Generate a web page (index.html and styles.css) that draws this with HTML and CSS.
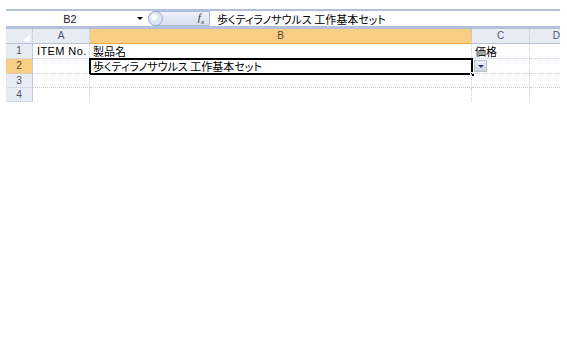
FILE: index.html
```html
<!DOCTYPE html>
<html lang="ja">

<head>
    <meta charset="UTF-8">
    <title>Sheet</title>
    <link rel="stylesheet" href="styles.css">
</head>

<body>
    <div class="app">
        <!-- Formula bar -->
        <div class="formula-bar">
            <div class="name-box">B2</div>
            <div class="name-arrow"></div>
            <div class="fx-pill">
                <span class="fx-circle"></span>
                <span class="fx">f<sub>x</sub></span>
            </div>
            <div class="formula-text">歩くティラノサウルス 工作基本セット</div>
        </div>

        <!-- Sheet grid -->
        <div class="sheet">
            <div class="hdr corner"><span class="corner-tri"></span></div>
            <div class="hdr">A</div>
            <div class="hdr sel">B</div>
            <div class="hdr">C</div>
            <div class="hdr last">D</div>

            <div class="rowhdr">1</div>
            <div class="cell item">ITEM No.</div>
            <div class="cell jp">製品名</div>
            <div class="cell jp">価格</div>
            <div class="cell last"></div>

            <div class="rowhdr sel">2</div>
            <div class="cell"></div>
            <div class="cell jp active">歩くティラノサウルス 工作基本セット<span class="handle"></span></div>
            <div class="cell"><span class="dd-btn"></span></div>
            <div class="cell last"></div>

            <div class="rowhdr">3</div>
            <div class="cell"></div>
            <div class="cell"></div>
            <div class="cell"></div>
            <div class="cell last"></div>

            <div class="rowhdr">4</div>
            <div class="cell nb"></div>
            <div class="cell nb"></div>
            <div class="cell nb"></div>
            <div class="cell nb last"></div>
        </div>
    </div>
</body>

</html>
```

FILE: styles.css
```css
* {
    margin: 0;
    padding: 0;
    box-sizing: border-box;
}

body {
    background: #fff;
    font-family: "Liberation Sans", "Noto Sans CJK JP", sans-serif;
    font-size: 11px;
    color: #000;
}

.app {
    margin: 9px 0 0 6px;
    width: 554px;
}

/* Formula bar */
.formula-bar {
    height: 20px;
    border-top: 2px solid #b3c0dd;
    border-bottom: 3px solid #b3c0dd;
    background: #fff;
    display: flex;
    align-items: center;
}

.name-box {
    width: 128px;
    text-align: center;
    font-size: 11px;
    color: #222;
}

.name-arrow {
    width: 0;
    height: 0;
    border-left: 3px solid transparent;
    border-right: 3px solid transparent;
    border-top: 3px solid #000;
    margin-left: 3px;
}

.fx-pill {
    margin-left: 5px;
    width: 62px;
    height: 15px;
    border: 1px solid #a9b9d6;
    border-left: none;
    border-radius: 8px 0 0 8px;
    background: linear-gradient(#eef2fa, #d7e0f0);
    display: flex;
    align-items: center;
    justify-content: space-between;
    padding-right: 5px;
}

.fx-circle {
    width: 15px;
    height: 15px;
    border-radius: 50%;
    border: 1px solid #9fb0cf;
    background: radial-gradient(circle at 40% 40%, #fff 0, #fff 2px, #dfe6f3 4px);
}

.fx {
    font-family: "Liberation Serif", serif;
    font-style: italic;
    font-size: 11px;
    color: #333;
}

.fx sub {
    font-size: 7px;
}

.formula-text {
    margin-left: 7px;
    font-family: "Noto Sans CJK JP", sans-serif;
    font-feature-settings: "palt";
    font-size: 11px;
    line-height: 14px;
}

/* Sheet grid */
.sheet {
    display: grid;
    grid-template-columns: 27px 57px 382px 58px 30px;
    grid-template-rows: 15px 15px 15px 14px 14px;
}

.hdr {
    background: #e6ebf4;
    border-right: 1px dotted #b6c0da;
    border-bottom: 1px solid #b6c2da;
    text-align: center;
    font-size: 10px;
    line-height: 14px;
    color: #4a5670;
}

.hdr.sel {
    background: #f8cd84;
    border-bottom-color: #f0a94a;
    color: #5a4a30;
}

.hdr.last {
    border-right: none;
    text-align: right;
    overflow: hidden;
}

.corner {
    position: relative;
}

.corner-tri {
    position: absolute;
    right: 2px;
    bottom: 2px;
    width: 0;
    height: 0;
    border-left: 7px solid transparent;
    border-bottom: 7px solid #fff;
}

.rowhdr {
    background: #e6ebf4;
    border-right: 1px solid #c3cde0;
    border-bottom: 1px dotted #c3cbe0;
    text-align: center;
    font-size: 10px;
    line-height: 14px;
    color: #4a5670;
}

.rowhdr.sel {
    background: #f8cd84;
    color: #5a4a30;
}

.cell {
    border-right: 1px dotted #c5cbe3;
    border-bottom: 1px dotted #c5cbe3;
    padding-left: 4px;
    font-size: 11px;
    line-height: 14px;
    white-space: nowrap;
    position: relative;
}

.cell.item {
    letter-spacing: 0.4px;
}

.cell.jp {
    font-family: "Noto Sans CJK JP", sans-serif;
    font-feature-settings: "palt";
    padding-left: 3px;
}

.cell.last {
    border-right: none;
}

.cell.nb {
    border-bottom: none;
}

.cell.active {
    border: 2px solid #000;
    margin: -1px -1px -1px -1px;
    padding-left: 2px;
    line-height: 12px;
}

.handle {
    position: absolute;
    right: -4px;
    bottom: -4px;
    width: 5px;
    height: 5px;
    background: #000;
    border: 1px solid #fff;
}

.dd-btn {
    position: absolute;
    left: 2px;
    top: 1px;
    width: 13px;
    height: 12px;
    background: linear-gradient(#eef1f7, #cfd6e3);
    border: 1px solid #b7c0d0;
}

.dd-btn::after {
    content: "";
    position: absolute;
    left: 3px;
    top: 4px;
    border-left: 3px solid transparent;
    border-right: 3px solid transparent;
    border-top: 3px solid #1f3a78;
}
```
